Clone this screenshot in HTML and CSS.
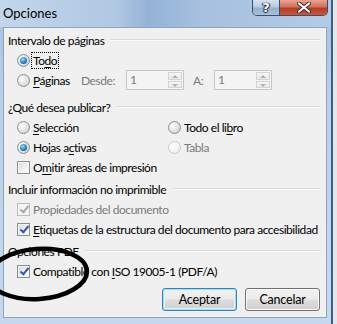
FILE: index.html
```html
<!DOCTYPE html>
<html lang="es">
<head>
<meta charset="utf-8">
<title>Opciones</title>
<link rel="stylesheet" href="styles.css">
</head>
<body>
<div class="screen">
  <div class="window">
    <div class="titlebar">
      <span class="title">Opciones</span>
      <div class="caption-btns">
        <span class="cap-btn help">?</span>
        <span class="cap-btn close">
          <svg width="16" height="11" viewBox="0 0 16 11"><path d="M3 1.5 L13 9.5 M13 1.5 L3 9.5" stroke="#3a2a2a" stroke-width="4" stroke-linecap="round"/><path d="M3 1.5 L13 9.5 M13 1.5 L3 9.5" stroke="#fff" stroke-width="2.2" stroke-linecap="round"/></svg>
        </span>
      </div>
    </div>
    <div class="client">
      <div class="group g1">
        <div class="group-head"><span>Intervalo de páginas</span><i class="rule"></i></div>
        <div class="row"><span class="radio on"></span><span class="label focus">To<u>d</u>o</span></div>
        <div class="row">
          <span class="radio"></span><span class="label pag"><u>P</u>áginas</span>
          <span class="dim desde">Desde:</span>
          <span class="spin"><span class="spin-val">1</span><span class="spin-btns"><b class="up"></b><b class="down"></b></span></span>
          <span class="dim a">A:</span>
          <span class="spin"><span class="spin-val">1</span><span class="spin-btns"><b class="up"></b><b class="down"></b></span></span>
        </div>
      </div>
      <div class="group g2">
        <div class="group-head"><span>¿Qué desea publicar?</span><i class="rule"></i></div>
        <div class="row">
          <span class="col"><span class="radio"></span><span class="label"><u>S</u>elección</span></span>
          <span class="col"><span class="radio"></span><span class="label">Todo el li<u>b</u>ro</span></span>
        </div>
        <div class="row">
          <span class="col"><span class="radio on"></span><span class="label">Hojas a<u>c</u>tivas</span></span>
          <span class="col"><span class="radio disabled"></span><span class="label dim">Tabla</span></span>
        </div>
        <div class="row"><span class="check"></span><span class="label">O<u>m</u>itir áreas de impresión</span></div>
      </div>
      <div class="group g3">
        <div class="group-head"><span>Incluir información no imprimible</span><i class="rule"></i></div>
        <div class="row"><span class="check checked disabled"></span><span class="label dim">Propiedades del documento</span></div>
        <div class="row"><span class="check checked"></span><span class="label"><u>E</u>tiquetas de la estructura del documento para accesibilidad</span></div>
      </div>
      <div class="group g4">
        <div class="group-head"><span>Opciones PDF</span><i class="rule"></i></div>
        <div class="row"><span class="check checked"></span><span class="label">Compatible con <u>I</u>SO 19005-1 (PDF/A)</span></div>
      </div>
      <div class="actions">
        <button class="btn default">Aceptar</button>
        <button class="btn">Cancelar</button>
      </div>
    </div>
  </div>
  <svg class="annot" width="337" height="324" viewBox="0 0 337 324">
    <ellipse cx="38" cy="274" rx="49" ry="25" transform="rotate(-4 38 274)" fill="none" stroke="#000" stroke-width="4.5"/>
  </svg>
</div>
</body>
</html>
```

FILE: styles.css
```css
* { box-sizing: border-box; }
html, body { margin: 0; padding: 0; }
body {
  width: 337px;
  height: 324px;
  overflow: hidden;
  background: #e4e6e9;
  font-family: "Lato", "Open Sans", sans-serif;
  font-size: 12px;
  letter-spacing: -0.45px;
  color: #000;
}
.screen {
  position: relative;
  width: 337px;
  height: 324px;
}
.window {
  width: 333px;
  height: 324px;
  background: linear-gradient(180deg, #a6c1de 0%, #b9d0e8 30%, #c6d9ee 100%);
  border-right: 2px solid #3f5d88;
  display: flex;
  flex-direction: column;
}
.titlebar {
  height: 27px;
  display: flex;
  align-items: flex-start;
  justify-content: space-between;
  background: linear-gradient(90deg, #c3d6eb 0%, #b0c8e2 35%, #93b3d8 45%, #a6c0de 60%, #b4cbe5 100%);
}
.title {
  padding: 4px 0 0 3px;
  font-size: 13px;
  letter-spacing: 0;
  color: #000;
  line-height: 18px;
}
.caption-btns {
  display: flex;
  margin-right: 3px;
  border: 1px solid #3a4d6c;
  border-top: none;
  border-radius: 0 0 5px 5px;
  overflow: hidden;
  height: 16px;
}
.cap-btn {
  height: 15px;
  display: flex;
  align-items: center;
  justify-content: center;
}
.help {
  width: 27px;
  background: linear-gradient(180deg, #d5e2f0 0%, #b7cbe2 48%, #95afce 52%, #a9c1dc 100%);
  color: #fff;
  font-weight: bold;
  font-size: 13px;
  letter-spacing: 0;
  font-family: "DejaVu Sans", sans-serif;
  text-shadow: 0 0 1px #223, 1px 0 1px #223, -1px 0 1px #223, 0 1px 1px #223;
  border-right: 1px solid #3a4d6c;
}
.close {
  width: 47px;
  background: linear-gradient(180deg, #e8a494 0%, #d2715f 45%, #b63c22 55%, #c9573c 100%);
}
.client {
  margin: 0 0 6px 3px;
  width: 324px;
  height: 291px;
  background: #f0f0f0;
  border: 1px solid #8ea3bd;
  padding: 2px 0 0 4px;
  display: flex;
  flex-direction: column;
}
.group { display: flex; flex-direction: column; }
.g2 { margin-top: 7px; }
.g3 { margin-top: 2px; }
.g4 { margin-top: 2px; }
.group-head {
  height: 20px;
  display: flex;
  align-items: center;
  gap: 6px;
  padding-right: 6px;
}
.group-head .rule {
  flex: 1;
  height: 2px;
  background: #d5dadf;
  border-bottom: 1px solid #fbfbfb;
}
.row {
  height: 20px;
  display: flex;
  align-items: center;
  padding-left: 9px;
}
.col {
  display: flex;
  align-items: center;
  width: 151px;
}
.label { margin-left: 3px; line-height: 15px; white-space: nowrap; }
.label u { text-decoration-thickness: 1px; text-underline-offset: 2px; }
.focus { outline: 1px dotted #000; outline-offset: 0; padding: 0 1px; margin-left: 2px; }
.pag { width: 48px; }
.dim { color: #7a7a7a; }
.desde { width: 45px; }
.a { margin-left: 9px; width: 21px; }
.radio {
  width: 13px;
  height: 13px;
  border-radius: 50%;
  border: 1px solid #8c8f94;
  background: radial-gradient(circle at 35% 35%, #ffffff 0%, #e6e6e6 45%, #c6c8cc 100%);
  position: relative;
  flex: none;
}
.radio.on::after {
  content: "";
  position: absolute;
  left: 2px; top: 2px;
  width: 7px; height: 7px;
  border-radius: 50%;
  background: radial-gradient(circle at 40% 35%, #9fdcff 0%, #3a8fd0 45%, #0f3f70 100%);
}
.radio.disabled {
  border-color: #c8cacc;
  background: radial-gradient(circle at 35% 35%, #ffffff 0%, #f2f2f2 60%, #e2e3e4 100%);
}
.check {
  width: 13px;
  height: 13px;
  border: 1px solid #8f8f8f;
  background: linear-gradient(135deg, #d4d6d8 0%, #eceef0 50%, #ffffff 100%);
  position: relative;
  flex: none;
  box-shadow: inset 0 0 0 1px #f4f4f4;
}
.check.checked::after {
  content: "";
  position: absolute;
  left: 3.5px; top: 0.5px;
  width: 3px; height: 7px;
  border: solid #3a56a8;
  border-width: 0 2px 2px 0;
  transform: rotate(40deg);
}
.check.disabled { border-color: #bdbdbd; background: #f4f4f4; box-shadow: none; }
.check.disabled::after { border-color: #a8a8a8; }
.spin {
  display: flex;
  width: 58px;
  height: 20px;
  border: 1px solid #c5c7ca;
  background: #f4f4f4;
  flex: none;
}
.spin-val {
  flex: 1;
  color: #7a7a7a;
  padding-left: 3px;
  line-height: 18px;
}
.spin-btns {
  width: 14px;
  display: flex;
  flex-direction: column;
  margin: 1px;
  gap: 1px;
}
.spin-btns b {
  flex: 1;
  border: 1px solid #d2d4d6;
  background: linear-gradient(180deg, #f6f6f6, #e8e8e8);
  position: relative;
}
.spin-btns b::after {
  content: "";
  position: absolute;
  left: 3px;
  border-left: 3px solid transparent;
  border-right: 3px solid transparent;
}
.spin-btns .up::after { top: 2px; border-bottom: 3px solid #b0b0b0; }
.spin-btns .down::after { top: 2px; border-top: 3px solid #b0b0b0; }
.actions {
  display: flex;
  justify-content: flex-end;
  gap: 8px;
  margin-top: 7px;
  padding-right: 6px;
}
.btn {
  width: 75px;
  height: 23px;
  font-family: inherit;
  font-size: 12.5px;
  letter-spacing: -0.2px;
  color: #000;
  border: 1px solid #707070;
  border-radius: 3px;
  background: linear-gradient(180deg, #f2f2f2 0%, #ebebeb 48%, #dddddd 52%, #cfcfcf 100%);
  box-shadow: inset 0 0 0 1px #fcfcfc;
  padding: 0;
}
.btn.default {
  border-color: #3c7fb1;
  box-shadow: inset 0 0 0 1px #a6dcf7, inset 0 0 0 2px #e3f3fb;
}
.annot {
  position: absolute;
  left: 0;
  top: 0;
  pointer-events: none;
}
```
